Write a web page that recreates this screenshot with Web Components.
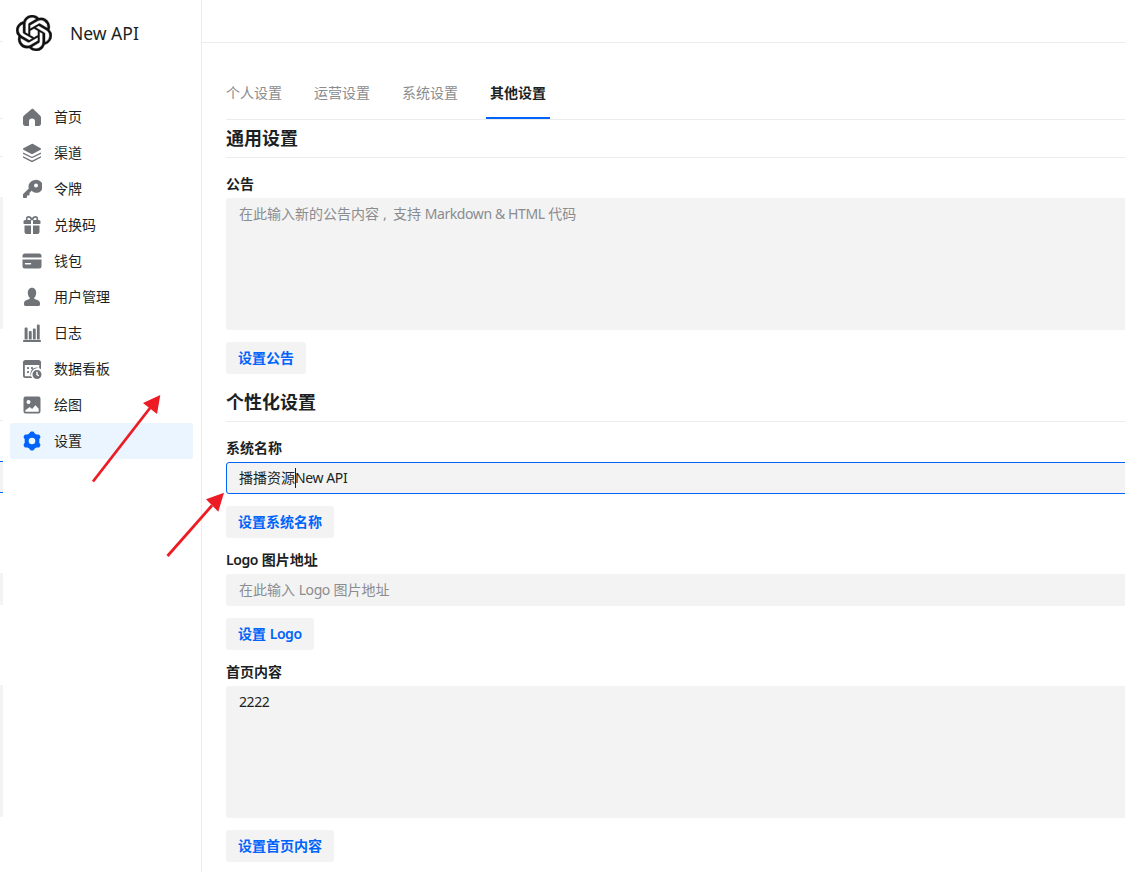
<!DOCTYPE html>
<html lang="zh">
<head>
<meta charset="utf-8">
<title>New API</title>
<style>
html,body{margin:0;padding:0;height:872px;overflow:hidden;background:#fff}
body{font-family:"Noto Sans","Noto Sans CJK SC",sans-serif;color:#1c1f23}
</style>
</head>
<body>
<app-shell>
  <side-nav slot="side"><span slot="brand">New API</span>
    <nav-item icon="home">首页</nav-item>
    <nav-item icon="layers">渠道</nav-item>
    <nav-item icon="key">令牌</nav-item>
    <nav-item icon="gift">兑换码</nav-item>
    <nav-item icon="card">钱包</nav-item>
    <nav-item icon="user">用户管理</nav-item>
    <nav-item icon="bars">日志</nav-item>
    <nav-item icon="calendar">数据看板</nav-item>
    <nav-item icon="image">绘图</nav-item>
    <nav-item icon="gear" active>设置</nav-item>
  </side-nav>
  <tab-bar>
    <tab-item>个人设置</tab-item>
    <tab-item>运营设置</tab-item>
    <tab-item>系统设置</tab-item>
    <tab-item active>其他设置</tab-item>
  </tab-bar>
  <form-section first><span slot="title">通用设置</span>
    <form-field rows placeholder><span slot="label">公告</span>在此输入新的公告内容<span style="letter-spacing:0;display:inline-block;width:14px;text-indent:4px">,</span>支持 <lat-text>Markdown &amp; HTML</lat-text> 代码</form-field>
    <set-button>设置公告</set-button>
  </form-section>
  <form-section><span slot="title">个性化设置</span>
    <form-field focused><span slot="label">系统名称</span>播播资源<text-caret></text-caret><lat-text>New API</lat-text></form-field>
    <set-button>设置系统名称</set-button>
    <form-field placeholder><span slot="label"><lat-text>Logo</lat-text> 图片地址</span>在此输入 <lat-text>Logo</lat-text> 图片地址</form-field>
    <set-button>设置 <lat-text>Logo</lat-text></set-button>
    <form-field rows><span slot="label">首页内容</span><lat-text>2222</lat-text></form-field>
    <set-button>设置首页内容</set-button>
  </form-section>
  <red-arrows slot="overlay"></red-arrows>
</app-shell>

<script>
const ICONS = {
  home:'<path d="M9 .8 1 7.6C.4 8.1 0 8.8 0 9.6v6.2C0 16.9 1 18 2.2 18h3.8v-4.6a3 3 0 0 1 6 0V18h3.8c1.200 0 2.200-1.100 2.200-2.200V9.600c0-.8-.4-1.500-1-2L10 .8a1.600 1.600 0 0 0-1 0Z" transform="translate(1 1)"/>',
  layers:'<path d="M10 .8 1.400 5.300c-.6.300-.6 1.100 0 1.400l8 4.200c.4.200.8.200 1.200 0l8-4.200c.6-.3.6-1.100 0-1.400L10.600.8a1 1 0 0 0-.6 0Z"/><path d="m1.300 9.400 8.400 4.300c.2.100.4.100.6 0l8.400-4.300c.5.500.5 1.200 0 1.600l-8.200 4.100c-.3.200-.7.200-1 0L1.300 11c-.5-.4-.5-1.100 0-1.600Z"/><path d="m1.300 13.200 8.400 4.200c.2.100.4.100.6 0l8.400-4.200c.5.500.5 1.200 0 1.600l-8.200 4.100c-.3.200-.7.200-1 0l-8.200-4.100c-.5-.4-.5-1.100 0-1.600Z"/>',
  key:'<path fill-rule="evenodd" d="M13 1a6.500 6.500 0 0 0-6.200 8.400l-5.400 5.400c-.3.3-.4.6-.4 1V18c0 .6.400 1 1 1h2c.6 0 1-.4 1-1v-1.500h1.500c.6 0 1-.4 1-1V14l2.100-2.200A6.500 6.500 0 1 0 13 1Zm1 3.500a2 2 0 1 1 0 4 2 2 0 0 1 0-4Z"/>',
  gift:'<path fill-rule="evenodd" d="M6.500 1C5 1 3.800 2.200 3.800 3.700c0 .5.100 1 .4 1.300H3a1.500 1.500 0 0 0-1.500 1.500V8c0 .6.400 1 1 1H9V5.200h2V9h6.500c.6 0 1-.4 1-1V6.500A1.500 1.500 0 0 0 17 5h-1.200c.3-.4.4-.8.4-1.300C16.200 2.200 15 1 13.500 1c-1.400 0-2.700.8-3.500 2-.8-1.200-2.100-2-3.500-2Zm0 1.800c1 0 1.900.9 2.200 2.200H6.500a1.100 1.100 0 1 1 0-2.200Zm7 0a1.100 1.100 0 1 1 0 2.200h-2.200c.3-1.300 1.200-2.200 2.200-2.200Z"/><path d="M2.500 10.500H9V19H4.500a2 2 0 0 1-2-2v-6.500ZM11 10.500h6.500V17a2 2 0 0 1-2 2H11v-8.500Z"/>',
  card:'<path d="M3 2.500h14A2.500 2.500 0 0 1 19.500 5v1.500H.5V5A2.500 2.500 0 0 1 3 2.500Z"/><path fill-rule="evenodd" d="M.5 8.500h19V15a2.500 2.500 0 0 1-2.500 2.500H3A2.500 2.500 0 0 1 .5 15V8.500ZM3.500 12a.7.7 0 0 0 0 1.500h5a.7.7 0 0 0 0-1.500h-5Z"/>',
  user:'<path d="M10 .8C7.500.8 5.800 3 5.800 5.800c0 2 .7 3.800 1.800 5 .4.500.2 1.100-.3 1.300l-2.600.8C3 13.400 2 14.700 2 16.200v1.300c0 .8.700 1.500 1.500 1.500h13c.8 0 1.500-.7 1.500-1.500v-1.300c0-1.500-1-2.800-2.700-3.300l-2.600-.8c-.5-.2-.7-.8-.3-1.300 1.100-1.200 1.800-3 1.800-5C14.200 3 12.500.8 10 .8Z"/>',
  bars:'<path d="M3.500 4.500h1.200c.5 0 .9.400.9.900V16.500H2.600V5.400c0-.5.400-.9.900-.9ZM7.700 8h1.100c.5 0 .9.400.9.900v7.600H6.800V8.900c0-.5.400-.9.900-.9ZM11.800 5.500h1c.5 0 .9.400.9.900v10.100h-2.800V6.400c0-.5.400-.9.900-.9ZM15.800 1.500h1c.5 0 .9.400.9.900v14.100h-2.800V2.400c0-.5.400-.9.900-.9Z"/><rect x="1" y="17" width="18" height="2" rx=".7"/>',
  calendar:'<path fill-rule="evenodd" d="M3.500 1h13A2.500 2.500 0 0 1 19 3.500v6.700a6 6 0 0 0-8.800 8.800H3.500A2.500 2.500 0 0 1 1 16.500v-13A2.500 2.500 0 0 1 3.500 1ZM2.800 6v10.500c0 .4.300.7.700.7h5.600a6 6 0 0 1-.1-1.200c0-4 3-6.900 6.500-7.100H17.200V6H2.800Z"/><rect x="5" y="8" width="2" height="2" rx=".4"/><rect x="9" y="8" width="2" height="2" rx=".4"/><rect x="5" y="12" width="2" height="2" rx=".4"/><path fill-rule="evenodd" d="M15 11a4.500 4.500 0 1 0 0 9 4.500 4.500 0 0 0 0-9Zm-.700 1.800h1.400v2.400l1.500 1-.8 1.100-2.100-1.400v-3.100Z"/>',
  image:'<path fill-rule="evenodd" d="M3.500 1.500h13a2 2 0 0 1 2 2v13a2 2 0 0 1-2 2h-13a2 2 0 0 1-2-2v-13a2 2 0 0 1 2-2ZM6.500 5a2 2 0 1 0 0 4 2 2 0 0 0 0-4ZM3.300 16.700h13.400v-3l-3.200-3.400-3.400 3.600-2.300-1.800-4.500 3.200v1.400Z"/>',
  gear:'<path fill-rule="evenodd" d="M8.200.9a1.200 1.200 0 0 1 1-.4h1.600c.4 0 .8.200 1 .4l1 1.700 1.700.9 2-.1c.4 0 .8.200 1 .6l.8 1.400c.2.300.2.800 0 1.200L17.300 8.300v3.400l1 1.700c.2.400.2.900 0 1.200l-.8 1.400c-.2.400-.6.600-1 .6l-2-.1-1.700.9-1 1.700c-.2.200-.6.400-1 .4H9.200c-.4 0-.8-.2-1-.4l-1-1.700-1.700-.9-2 .1c-.4 0-.8-.2-1-.6l-.8-1.400c-.2-.3-.2-.8 0-1.200l1-1.700V8.300l-1-1.700c-.2-.4-.2-.9 0-1.200l.8-1.400c.2-.4.6-.6 1-.6l2 .1 1.700-.9 1-1.700ZM10 6.700a3.300 3.300 0 1 0 0 6.600 3.300 3.300 0 0 0 0-6.600Z"/>'
};

function def(name, css, html){
  class C extends HTMLElement{
    constructor(){super();this.attachShadow({mode:'open'}).innerHTML='<style>'+css+'</style>'+html;}
  }
  customElements.define(name,C);
}

class AppShell extends HTMLElement{
  constructor(){
    super();
    this.attachShadow({mode:'open'}).innerHTML=`<style>
      :host{display:flex;position:relative;width:1125px;height:872px;overflow:hidden}
      .ghost{flex:0 0 3px;background:linear-gradient(to bottom,
        #fff 0 41px,#ececec 41px 42px,#fff 42px 118px,#ececec 118px 119px,#fff 119px 156px,#ececec 156px 157px,
        #fff 157px 197px,#f3f3f3 197px 329px,#fff 329px 420px,#ececec 420px 421px,#fff 421px 461px,
        #0064fa 461px 462px,#f3f3f3 462px 492px,#0064fa 492px 493px,#fff 493px 573px,#f3f3f3 573px 605px,
        #fff 605px 685px,#f3f3f3 685px 817px,#fff 817px)}
      .right{flex:1;min-width:0;display:flex;flex-direction:column}
      .top{flex:0 0 42px;border-bottom:1px solid #ececec}
      .content{width:1000px;padding:24px 0 0 24px}
    </style>
    <div class="ghost"></div>
    <slot name="side"></slot>
    <div class="right"><div class="top"></div><div class="content"><slot></slot></div></div>
    <slot name="overlay"></slot>`;
  }
}
customElements.define('app-shell',AppShell);

class SideNav extends HTMLElement{
  constructor(){
    super();
    this.attachShadow({mode:'open'}).innerHTML=`<style>
      :host{display:flex;flex-direction:column;flex:0 0 199px;width:199px;box-sizing:border-box;border-right:1px solid #ececec;height:872px}
      .brand{height:66px;display:flex;align-items:center;padding-left:13px;gap:19px;font-size:17.500px;font-weight:400;color:#1c1f23}
      .brand svg{margin-right:-1px}
      svg{width:36px;height:36px;display:block}
      nav{display:flex;flex-direction:column;padding:33px 7px 0 7px}
    </style>
    <div class="brand">
      <svg viewBox="0 0 24 24" fill="#111" stroke="#111" stroke-width=".25"><path d="M22.2819 9.8211a5.9847 5.9847 0 0 0-.5157-4.9108 6.0462 6.0462 0 0 0-6.5098-2.9A6.0651 6.0651 0 0 0 4.9807 4.1818a5.9847 5.9847 0 0 0-3.9977 2.9 6.0462 6.0462 0 0 0 .7427 7.0966 5.98 5.98 0 0 0 .511 4.9107 6.051 6.051 0 0 0 6.5146 2.9001A5.9847 5.9847 0 0 0 13.2599 24a6.0557 6.0557 0 0 0 5.7718-4.2058 5.9894 5.9894 0 0 0 3.9977-2.9001 6.0557 6.0557 0 0 0-.7475-7.0729zm-9.022 12.6081a4.4755 4.4755 0 0 1-2.8764-1.0408l.1419-.0804 4.7783-2.7582a.7948.7948 0 0 0 .3927-.6813v-6.7369l2.02 1.1686a.071.071 0 0 1 .038.052v5.5826a4.504 4.504 0 0 1-4.4945 4.4944zm-9.6607-4.1254a4.4708 4.4708 0 0 1-.5346-3.0137l.142.0852 4.783 2.7582a.7712.7712 0 0 0 .7806 0l5.8428-3.3685v2.3324a.0804.0804 0 0 1-.0332.0615L9.74 19.9502a4.4992 4.4992 0 0 1-6.1408-1.6464zM2.3408 7.8956a4.485 4.485 0 0 1 2.3655-1.9728V11.6a.7664.7664 0 0 0 .3879.6765l5.8144 3.3543-2.0201 1.1685a.0757.0757 0 0 1-.071 0l-4.8303-2.7865A4.504 4.504 0 0 1 2.3408 7.872zm16.5963 3.8558L13.1038 8.364 15.1192 7.2a.0757.0757 0 0 1 .071 0l4.8303 2.7913a4.4944 4.4944 0 0 1-.6765 8.1042v-5.6772a.79.79 0 0 0-.407-.667zm2.0107-3.0231l-.142-.0852-4.7735-2.7818a.7759.7759 0 0 0-.7854 0L9.409 9.2297V6.8974a.0662.0662 0 0 1 .0284-.0615l4.8303-2.7866a4.4992 4.4992 0 0 1 6.6802 4.66zM8.3065 12.863l-2.02-1.1638a.0804.0804 0 0 1-.038-.0567V6.0742a4.4992 4.4992 0 0 1 7.3757-3.4537l-.142.0805L8.704 5.459a.7948.7948 0 0 0-.3927.6813zm1.0976-2.3654l2.602-1.4998 2.6069 1.4998v2.9994l-2.5974 1.4997-2.6067-1.4997Z"/></svg>
      <slot name="brand"></slot>
    </div>
    <nav><slot></slot></nav>`;
  }
}
customElements.define('side-nav',SideNav);

class NavItem extends HTMLElement{
  constructor(){
    super();
    const on=this.hasAttribute('active');
    this.attachShadow({mode:'open'}).innerHTML=`<style>
      :host{display:flex;align-items:center;height:36px;width:183px;box-sizing:border-box;padding-left:12px;gap:12px;border-radius:3px;font-size:14px;color:#1c1f23;${on?'background:#eaf5ff;':''}}
      svg{width:20px;height:20px;display:block;color:${on?'#0064fa':'#707378'};fill:currentColor}
      span{margin-bottom:2px}
    </style><svg viewBox="0 0 20 20">${ICONS[this.getAttribute('icon')]||''}</svg><span><slot></slot></span>`;
  }
}
customElements.define('nav-item',NavItem);

def('lat-text',':host{display:inline;letter-spacing:-.4px}','<slot></slot>');
def('tab-bar',':host{display:flex;gap:24px;border-bottom:1px solid #ececec}','<slot></slot>');

class TabItem extends HTMLElement{
  constructor(){
    super();
    const on=this.hasAttribute('active');
    this.attachShadow({mode:'open'}).innerHTML=`<style>
      :host{display:block;padding:16px 4px 14px;font-size:14px;line-height:20px;border-bottom:2px solid ${on?'#0064fa':'transparent'};color:${on?'#1c1f23':'#8a8c8f'};font-weight:${on?'700':'400'}}
      :host(:first-child){padding-left:0}
    </style><slot></slot>`;
  }
}
customElements.define('tab-item',TabItem);

class FormSection extends HTMLElement{
  constructor(){
    super();
    const first=this.hasAttribute('first');
    this.attachShadow({mode:'open'}).innerHTML=`<style>
      :host{display:block;padding-top:${first?6:16}px}
      h2{margin:0 0 16px;font-size:18px;line-height:25px;font-weight:700;padding-bottom:6px;border-bottom:1px solid #ececec;color:#1c1f23}
      .body{display:flex;flex-direction:column;align-items:flex-start;gap:12px}
    </style><h2><slot name="title"></slot></h2><div class="body"><slot></slot></div>`;
  }
}
customElements.define('form-section',FormSection);

class FormField extends HTMLElement{
  constructor(){
    super();
    const rows=this.hasAttribute('rows'),ph=this.hasAttribute('placeholder'),fo=this.hasAttribute('focused');
    this.attachShadow({mode:'open'}).innerHTML=`<style>
      :host{display:block;width:100%}
      .label{display:block;font-size:14px;line-height:20px;font-weight:600;margin-bottom:4px;color:#1c1f23}
      .box{box-sizing:border-box;height:${rows?132:32}px;padding:5px 12px;border:1px solid ${fo?'#0064fa':'transparent'};background:#f3f3f3;border-radius:3px;font-size:14px;line-height:20px;color:${ph?'#8a8c8f':'#1c1f23'};white-space:pre-wrap}
    </style><div class="label"><slot name="label"></slot></div><div class="box"><slot></slot></div>`;
  }
}
customElements.define('form-field',FormField);

def('text-caret',':host{display:inline-block;width:1px;height:20px;margin-right:-1px;background:#1c1f23;vertical-align:top}','');
def('set-button',':host{display:inline-block;height:32px;padding:0 12px;line-height:32px;background:#f3f3f3;border-radius:3px;font-size:14px;font-weight:600;color:#0064fa}','<slot></slot>');

class RedArrows extends HTMLElement{
  constructor(){
    super();
    this.attachShadow({mode:'open'}).innerHTML=`<style>
      :host{position:absolute;inset:0;pointer-events:none;display:block}
      svg{width:1125px;height:872px;display:block}
    </style>
    <svg viewBox="0 0 1125 872">
      <line x1="93" y1="481.500" x2="150" y2="408" stroke="#ed1c24" stroke-width="2.800"/>
      <polygon points="160.300,395 143,403 157,414" fill="#ed1c24"/>
      <line x1="167.500" y1="556" x2="212" y2="505.500" stroke="#ed1c24" stroke-width="2.800"/>
      <polygon points="224,492.700 206,499.300 218.300,511.700" fill="#ed1c24"/>
    </svg>`;
  }
}
customElements.define('red-arrows',RedArrows);
</script>
</body>
</html>
